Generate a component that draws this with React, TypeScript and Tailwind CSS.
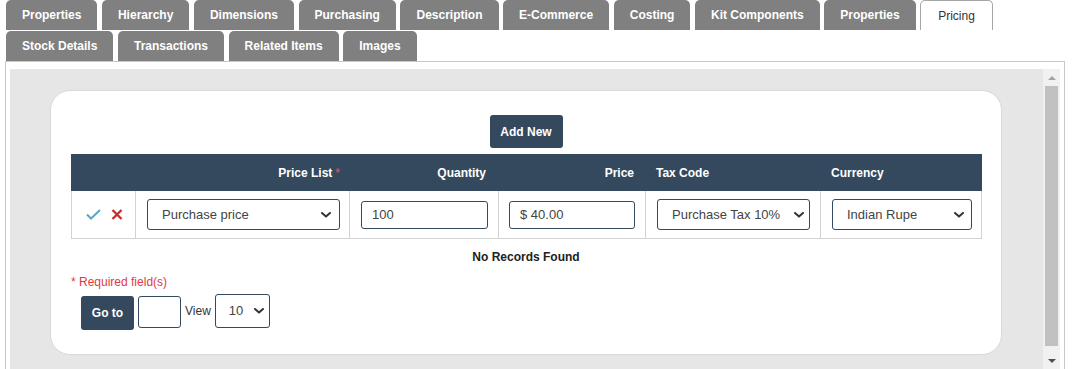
const tabsTop = ["Properties", "Hierarchy", "Dimensions", "Purchasing", "Description", "E-Commerce", "Costing", "Kit Components", "Properties"]
const tabsBottom = ["Stock Details", "Transactions", "Related Items", "Images"]

function Chevron() {
  return (
    <svg width="10" height="6" viewBox="0 0 10 6" className="shrink-0">
      <path d="M1 1l4 3.6L9 1" fill="none" stroke="#333" strokeWidth="2" strokeLinecap="round" strokeLinejoin="round" />
    </svg>
  )
}

function Tab({ label }: { label: string }) {
  return (
    <div className="h-[30px] px-4 flex items-center rounded-t-[5px] bg-[#808080] text-white text-[12px] font-bold">
      {label}
    </div>
  )
}

function FakeSelect({ value, className }: { value: string; className: string }) {
  return (
    <div className={`h-[31px] flex items-center justify-between border border-[#34495e] rounded-[3px] bg-white text-[13px] text-[#444] ${className}`}>
      <span className="whitespace-nowrap overflow-hidden">{value}</span>
      <Chevron />
    </div>
  )
}

function FakeInput({ value, className }: { value: string; className: string }) {
  return (
    <div className={`h-[28px] flex items-center border border-[#34495e] rounded-[3px] bg-white text-[13px] text-[#444] pl-[10px] ${className}`}>
      {value}
    </div>
  )
}

export default function App() {
  return (
    <div className="w-[1072px] h-[369px] overflow-hidden bg-white flex flex-col font-['Liberation_Sans',Arial,sans-serif]">
      {/* Tabs */}
      <div className="flex gap-[4.6px] pl-[6px]">
        {tabsTop.map((t, i) => (
          <Tab key={i} label={t} />
        ))}
        <div className="h-[30px] px-[17px] flex items-center rounded-t-[5px] bg-white border border-b-0 border-[#a6a6a6] text-[#333] text-[12px]">
          Pricing
        </div>
      </div>
      <div className="flex gap-[4.6px] pl-[6px] mt-[1px]">
        {tabsBottom.map((t, i) => (
          <Tab key={i} label={t} />
        ))}
      </div>

      {/* Content box */}
      <div className="ml-[5px] w-[1060px] flex-1 border border-b-0 border-[#c8c8c8] pt-[7px] px-[4px] flex flex-col">
        <div className="flex-1 flex bg-[#e6e6e6]">
          <div className="flex-1 pl-[40px] pt-[21px]">
            <div className="w-[952px] h-[265px] bg-white border border-[#d9d9d9] rounded-[20px] pt-[24px] flex flex-col">
              <div className="flex justify-center">
                <button className="h-[33px] w-[73px] rounded-[3px] bg-[#34495e] text-white text-[12px] font-bold">Add New</button>
              </div>

              {/* Table */}
              <div className="ml-[20px] mt-[6px] w-[911px]">
                <div className="grid grid-cols-[64px_214px_149px_147px_175px_162px] h-[37px] bg-[#34495e] text-white text-[12px] font-bold">
                  <div />
                  <div className="flex items-center justify-end pr-[9px]">
                    Price List<span className="text-[#e25b5b] font-normal ml-[3px]">*</span>
                  </div>
                  <div className="flex items-center justify-end pr-[12px]">Quantity</div>
                  <div className="flex items-center justify-end pr-[11px]">Price</div>
                  <div className="flex items-center pl-[11px]">Tax Code</div>
                  <div className="flex items-center pl-[11px]">Currency</div>
                </div>
                <div className="grid grid-cols-[64px_214px_149px_147px_175px_162px] h-[48px] border-b border-[#d3d3d3]">
                  <div className="border-l border-[#d3d3d3] flex items-center pl-[14px] gap-[10px]">
                    <svg width="15" height="11" viewBox="0 0 15 11">
                      <path d="M1 5.5l4 4L14 1" fill="none" stroke="#5ba6c6" strokeWidth="2" />
                    </svg>
                    <svg width="12" height="11" viewBox="0 0 12 11">
                      <path d="M1.5 1l9 9M10.5 1l-9 9" fill="none" stroke="#c62d2d" strokeWidth="2.4" />
                    </svg>
                  </div>
                  <div className="border-l border-[#d3d3d3] flex items-center pl-[11px]">
                    <FakeSelect value="Purchase price" className="w-[193px] pl-[14px] pr-[8px]" />
                  </div>
                  <div className="border-l border-[#d3d3d3] flex items-center pl-[11px]">
                    <FakeInput value="100" className="w-[127px]" />
                  </div>
                  <div className="border-l border-[#d3d3d3] flex items-center pl-[10px]">
                    <FakeInput value="$ 40.00" className="w-[126px]" />
                  </div>
                  <div className="border-l border-[#d3d3d3] flex items-center pl-[11px]">
                    <FakeSelect value="Purchase Tax 10%" className="w-[153px] pl-[14px] pr-[5px]" />
                  </div>
                  <div className="border-l border-r border-[#d3d3d3] flex items-center pl-[11px]">
                    <FakeSelect value="Indian Rupe" className="w-[140px] pl-[14px] pr-[7px]" />
                  </div>
                </div>
              </div>

              <div className="mt-[11px] text-center text-[12px] leading-[14px] font-bold text-[#222]">No Records Found</div>
              <div className="mt-[11px] ml-[20px] text-[12px] leading-[14px] text-[#e0393e]">* Required field(s)</div>

              {/* Pager */}
              <div className="mt-[5px] ml-[30px] flex items-start gap-[4px]">
                <button className="mt-[2px] h-[34px] w-[53px] rounded-[3px] bg-[#34495e] text-white text-[12px] font-bold">Go to</button>
                <div className="mt-[2px] h-[32px] w-[43px] border border-[#34495e] rounded-[3px] bg-white" />
                <div className="mt-[10px] text-[12px] leading-[14px] text-[#333]">View</div>
                <div className="h-[34px] w-[55px] flex items-center justify-between border border-[#34495e] rounded-[3px] bg-white text-[13px] text-[#444] pl-[13px] pr-[5px]">
                  <span>10</span>
                  <Chevron />
                </div>
              </div>
            </div>
          </div>

          {/* Scrollbar */}
          <div className="w-[17px] bg-[#f1f1f1] flex flex-col items-center">
            <div className="h-[17px] flex items-center justify-center">
              <div className="w-0 h-0 border-l-[4px] border-r-[4px] border-b-[4px] border-l-transparent border-r-transparent border-b-[#a3a3a3]" />
            </div>
            <div className="w-[13px] h-[260px] bg-[#c1c1c1]" />
            <div className="flex-1" />
            <div className="h-[17px] flex items-center justify-center">
              <div className="w-0 h-0 border-l-[4px] border-r-[4px] border-t-[4px] border-l-transparent border-r-transparent border-t-[#505050]" />
            </div>
          </div>
        </div>
      </div>
    </div>
  )
}
